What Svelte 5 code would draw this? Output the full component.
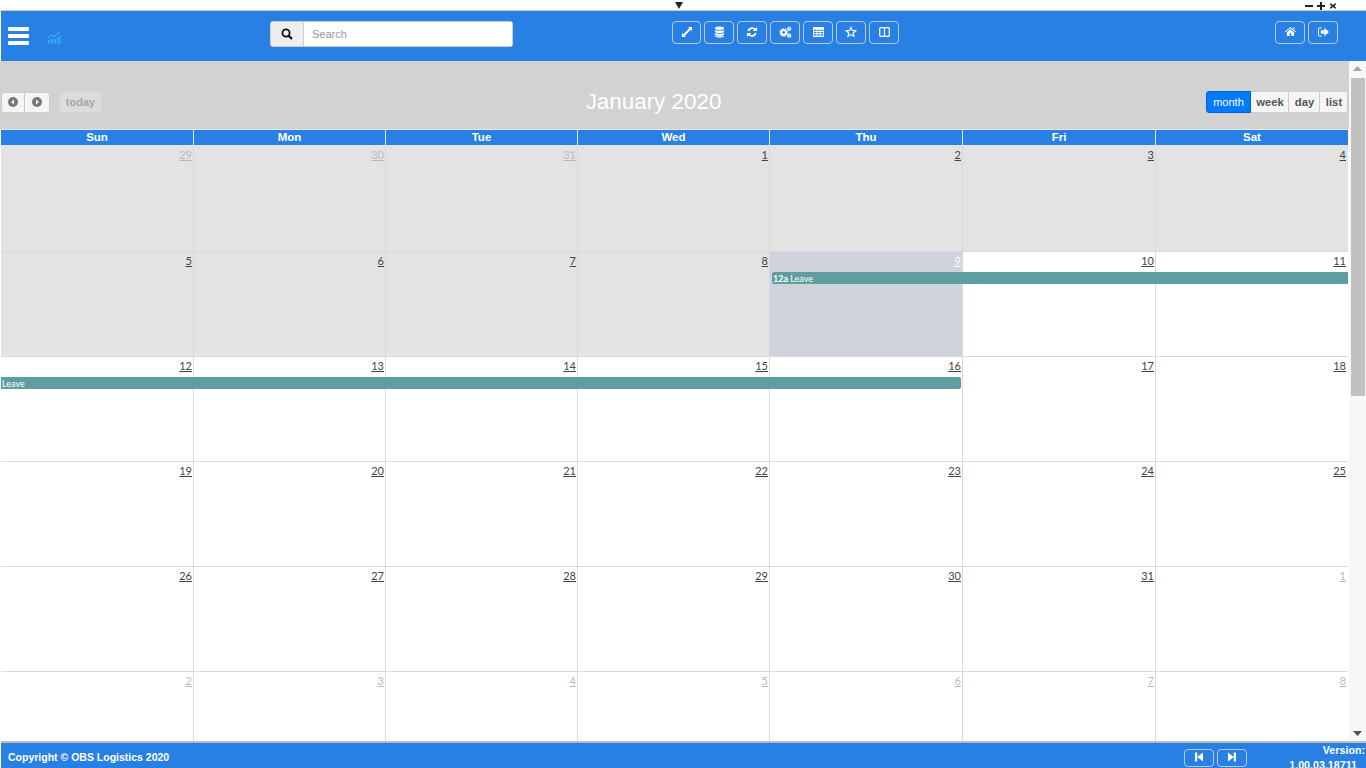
<script>
  const heads = ['Sun','Mon','Tue','Wed','Thu','Fri','Sat'];
  const weeks = [
    { h: 107, days: [[29,4],[30,4],[31,4],[1,2],[2,2],[3,2],[4,2]] },
    { h: 105, days: [[5,2],[6,2],[7,2],[8,2],[9,3],[10,0],[11,0]], ev: { time: '12a', cls: 'from-thu' } },
    { h: 105, days: [[12,0],[13,0],[14,0],[15,0],[16,0],[17,0],[18,0]], ev: { time: '', cls: 'to-thu' } },
    { h: 105, days: [[19,0],[20,0],[21,0],[22,0],[23,0],[24,0],[25,0]] },
    { h: 105, days: [[26,0],[27,0],[28,0],[29,0],[30,0],[31,0],[1,1]] },
    { h: 70, days: [[2,1],[3,1],[4,1],[5,1],[6,1],[7,1],[8,1]] }
  ];
  const kinds = ['', 'muted', 'past', 'today', 'past muted'];
  const topButtons = ['expand','db','sync','cogs','table','star','cols'];
</script>

<div class="page">
  <div class="strip">
    <svg class="caret" width="8" height="7" viewBox="0 0 8 7"><path d="M0 0h8L4 7z" fill="#222"/></svg>
    <div class="winctl">
      <svg width="8" height="8" viewBox="0 0 8 8"><path d="M0 3h8v2H0z" fill="#222"/></svg>
      <svg width="8" height="8" viewBox="0 0 8 8"><path d="M3 0h2v3h3v2H5v3H3V5H0V3h3z" fill="#222"/></svg>
      <svg width="8" height="8" viewBox="0 0 8 8"><path d="M1.500 1l2.500 2 2.500-2L7 2.500 5.300 4 7 5.500 6.500 7 4 5 1.500 7 1 5.500 2.700 4 1 2.500z" fill="#222"/></svg>
    </div>
  </div>

  <header class="top">
    <div class="burger"><i></i><i></i><i></i></div>
    <svg class="chart" width="14" height="13" viewBox="0 0 14 13">
      <path d="M1 12.500V9h2v3.500zM4 12.500V7.500h2v5zM7 12.500V8h2v4.500zM10 12.500V6h1.500v6.500zM12.200 12.500V5h1.500v7.500z" fill="#35a8f6"/>
      <path d="M1 6.500l3.500-2.500L7 5.500l5.500-4.500" fill="none" stroke="#35a8f6" stroke-width="1.100"/>
    </svg>
    <div class="search">
      <span class="addon">
        <svg width="12" height="12" viewBox="0 0 12 12"><circle cx="5" cy="5" r="3.600" fill="none" stroke="#111" stroke-width="1.800"/><path d="M7.600 7.600L11 11" stroke="#111" stroke-width="2.200"/></svg>
      </span>
      <input placeholder="Search" />
    </div>
    <div class="tools">
      {#each topButtons as b}
        <button class="ghost">
          {#if b === 'expand'}
            <svg width="12" height="12" viewBox="0 0 13 13" fill="#fff"><path d="M7.500 1H12v4.500L10.500 4 4 10.500 5.500 12H1V7.500L2.500 9 9 2.500z"/></svg>
          {:else if b === 'db'}
            <svg width="11" height="12" viewBox="0 0 12 13" fill="#fff"><ellipse cx="6" cy="2.500" rx="5" ry="2"/><path d="M1 4.200c1 1.400 9 1.400 10 0V6.300c-1 1.800-9 1.800-10 0zM1 7.300c1 1.400 9 1.400 10 0v2c-1 1.800-9 1.800-10 0zM1 10.100c1 1.400 9 1.400 10 0v.7c-1 2.300-9 2.300-10 0z"/></svg>
          {:else if b === 'sync'}
            <svg width="12" height="12" viewBox="0 0 13 13" fill="none"><path d="M2.400 5.500A4.300 4.300 0 0 1 9.800 3.800" stroke="#fff" stroke-width="2"/><path d="M10.600 7.500A4.300 4.300 0 0 1 3.200 9.200" stroke="#fff" stroke-width="2"/><path d="M12 1v4.500H7.500zM1 12V7.500h4.500z" fill="#fff"/></svg>
          {:else if b === 'cogs'}
            <svg width="13" height="12" viewBox="0 0 14 13" fill="none" stroke="#fff"><circle cx="5" cy="7" r="2.600" stroke-width="2.200"/><circle cx="5" cy="7" r="4.300" stroke-width="1" stroke-dasharray="1.500 1.200"/><circle cx="11" cy="3" r="1.500" stroke-width="1.600"/><circle cx="11" cy="10.500" r="1.500" stroke-width="1.600"/></svg>
          {:else if b === 'table'}
            <svg width="11" height="10" viewBox="0 0 12 11" fill="#fff"><path d="M0 0h12v11H0zM1 3v1.500h2.800V3zm3.800 0v1.500h2.400V3zm3.400 0v1.500H11V3zM1 5.500V7h2.800V5.500zm3.800 0V7h2.400V5.500zm3.400 0V7H11V5.500zM1 8v1.500h2.800V8zm3.800 0v1.500h2.400V8zm3.400 0v1.500H11V8z" fill-rule="evenodd"/></svg>
          {:else if b === 'star'}
            <svg width="12" height="12" viewBox="0 0 13 13"><path d="M6.500 1.500l1.500 3.300 3.600.4-2.700 2.400.8 3.500-3.200-1.800-3.200 1.800.8-3.500L1.400 5.200 5 4.800z" fill="none" stroke="#fff" stroke-width="1.300"/></svg>
          {:else}
            <svg width="11" height="10" viewBox="0 0 12 11" fill="none" stroke="#fff" stroke-width="1.400"><rect x=".7" y=".7" width="10.600" height="9.600" rx="1"/><path d="M6 1v9"/></svg>
          {/if}
        </button>
      {/each}
    </div>
    <div class="tools right">
      <button class="ghost">
        <svg width="11" height="9" viewBox="0 0 12 10" fill="#fff"><path d="M6 0l6 5-.7.800L6 1.500.7 5.800 0 5zM2 6l4-3.400L10 6v4H7V7H5v3H2zM9 .6h1.500v2.200L9 1.600z"/></svg>
      </button>
      <button class="ghost">
        <svg width="11" height="10" viewBox="0 0 12 11"><path d="M4 1H1.500a1 1 0 0 0-1 1v7a1 1 0 0 0 1 1H4" fill="none" stroke="#fff" stroke-width="1"/><path d="M3 3.500h4V.8l5 4.700-5 4.700V7.500H3z" fill="#fff"/></svg>
      </button>
    </div>
  </header>

  <div class="middle">
    <main class="cal">
      <div class="toolbar">
        <div class="left">
          <div class="group nav">
            <button class="lite">
              <svg width="10" height="10" viewBox="0 0 10 10"><circle cx="5" cy="5" r="5" fill="#777"/><path d="M6 2.500v5L3 5z" fill="#f5f5f5"/></svg>
            </button>
            <button class="lite">
              <svg width="10" height="10" viewBox="0 0 10 10"><circle cx="5" cy="5" r="5" fill="#777"/><path d="M4 2.500v5L7 5z" fill="#f5f5f5"/></svg>
            </button>
          </div>
          <button class="todaybtn">today</button>
        </div>
        <h2>January 2020</h2>
        <div class="group views">
          <button class="active">month</button>
          <button class="lite">week</button>
          <button class="lite">day</button>
          <button class="lite">list</button>
        </div>
      </div>

      <div class="grid heads">
        {#each heads as h}<div class="head">{h}</div>{/each}
      </div>

      {#each weeks as w}
        <div class="grid week" style="height:{w.h}px">
          {#each w.days as d, i}
            <div class="day {kinds[d[1]]}" style="grid-column:{i + 1}"><span class="num">{d[0]}</span></div>
          {/each}
          {#if w.ev}
            <div class="event {w.ev.cls}">
              {#if w.ev.time}<b>{w.ev.time}</b>{' '}{/if}Leave
            </div>
          {/if}
        </div>
      {/each}
    </main>

    <div class="scroll">
      <svg class="arrow" width="9" height="5" viewBox="0 0 9 5"><path d="M4.500 0L9 5H0z" fill="#a3a3a3"/></svg>
      <div class="thumb"></div>
      <svg class="arrow down" width="9" height="5" viewBox="0 0 9 5"><path d="M0 0h9L4.500 5z" fill="#505050"/></svg>
    </div>
  </div>

  <footer class="foot">
    <span class="copy">Copyright © OBS Logistics 2020</span>
    <div class="pager">
      <button class="ghost small">
        <svg width="8" height="10" viewBox="0 0 9 10" fill="#fff"><path d="M0 0h2.500v10H0zM9 0v10L2.500 5z"/></svg>
      </button>
      <button class="ghost small">
        <svg width="8" height="10" viewBox="0 0 9 10" fill="#fff"><path d="M9 0H6.500v10H9zM0 0v10l6.500-5z"/></svg>
      </button>
    </div>
    <div class="version">Version:<br /><span class="build">1.00.03.18711</span></div>
  </footer>
</div>

<style>
  :global(body) { margin: 0; background: #fff; overflow: hidden; }
  .page { width: 1366px; height: 768px; display: flex; flex-direction: column; overflow: hidden; font-family: "Liberation Sans", Arial, sans-serif; }
  button { font-family: inherit; padding: 0; cursor: pointer; }

  .strip { height: 10px; flex: none; display: flex; align-items: center; border-bottom: 1px solid #c9c9c9; }
  .caret { margin-left: 675px; margin-top: 1px; }
  .winctl { display: flex; gap: 4px; margin-left: 622px; margin-top: 1px; }

  .top { height: 50px; flex: none; margin-left: 1px; background: #2980e4; display: flex; align-items: flex-start; }
  .burger { width: 21px; margin: 16px 0 0 7px; display: flex; flex-direction: column; gap: 3.500px; }
  .burger i { display: block; height: 3.500px; background: #fff; border-radius: 1px; }
  .chart { margin: 20px 0 0 18px; }
  .search { display: flex; width: 243px; height: 26px; margin: 10px 0 0 209px; box-sizing: border-box; border: 1px solid #ccc; border-radius: 3px; background: #fff; }
  .addon { width: 32px; flex: none; background: #eee; border-right: 1px solid #ccc; display: flex; align-items: center; justify-content: center; border-radius: 2px 0 0 2px; }
  .search input { flex: 1; min-width: 0; border: 0; outline: 0; padding: 0 0 0 8px; font: 11px "Liberation Sans", sans-serif; color: #555; background: #fff; }
  .search input::placeholder { color: #999; opacity: 1; }

  .tools { display: flex; gap: 3px; margin: 10px 0 0 159px; }
  .tools.right { margin-left: 376px; }
  .ghost { width: 30px; height: 23px; box-sizing: border-box; background: transparent; border: 1px solid #b9c9dc; border-radius: 4px; display: flex; align-items: center; justify-content: center; padding-bottom: 2px; }
  .tools .ghost:first-child:not(:last-child) { width: 29px; }
  .tools.right .ghost:first-child { width: 30px; }

  .middle { flex: 1; min-height: 0; display: flex; }
  .cal { width: 1348px; flex: none; padding-left: 1px; background: #fff; }
  .toolbar { height: 68px; background: #d2d2d2; margin-left: -1px; padding-left: 1px; padding-right: 1px; display: grid; grid-template-columns: 1fr auto 1fr; align-items: center; }
  .left { display: flex; align-items: center; gap: 9px; margin-top: 14px; }
  .group { display: flex; }
  .nav button { width: 25px; height: 21px; display: flex; align-items: center; justify-content: center; }
  .nav button:first-child { width: 24px; }
  .lite { background: #f5f5f5; border: 1px solid #ccc; color: #555; font-size: 11px; font-weight: 700; height: 22px; }
  .nav .lite:first-child { border-radius: 3px 0 0 3px; }
  .nav .lite:last-child { border-radius: 0 3px 3px 0; border-left: 0; }
  .todaybtn { width: 43px; height: 21px; background: #dcdcdc; border: 1px solid #d6d6d6; border-radius: 3px; color: #a6a6a6; font-size: 11px; font-weight: 700; }
  h2 { margin: 14px 0 0; font-size: 22.400px; font-weight: 400; color: #fff; line-height: 28px; transform: translateX(-21px); }
  .views { justify-self: end; margin-top: 14px; }
  .views button { height: 22px; border-left: 0; }
  .views .active { width: 45px; background: #007bff; border: 1px solid #0062cc; border-radius: 3px 0 0 3px; color: #fff; font-size: 11px; font-weight: 400; }
  .views .lite { font-size: 11.300px; padding-left: 1px; }
  .views .lite:nth-child(2) { width: 38px; }
  .views .lite:nth-child(3) { width: 31px; }
  .views .lite:nth-child(4) { width: 28px; border-radius: 0 3px 3px 0; }

  .grid { display: grid; grid-template-columns: 193px 192px 192px 192px 193px 193px 192px; width: 1347px; }
  .heads { border-top: 1px solid #e6e6e6; height: 15px; }
  .head { background: #2980e4; color: #fff; font-size: 11.500px; font-weight: 700; line-height: 15px; text-align: center; border-right: 1px solid #dfe9f5; box-sizing: border-box; }
  .head:last-child { border-right: 0; }
  .week { box-sizing: border-box; }
  .day { grid-row: 1; border-right: 1px solid #dadada; border-bottom: 1px solid #dadada; box-sizing: border-box; text-align: right; padding: 2px 1px 0 0; background: #fff; min-height: 0; font-size: 11px; line-height: 13px; }
  .heads + .week .day { padding-top: 3px; }
  .day:nth-child(7) { border-right: 0; padding-right: 2px; }
  .num { font: 11px/13px Lato, "Open Sans", sans-serif; color: #444; text-decoration: underline; }
  .muted .num { color: #bbb; }
  .past { background: #e3e3e3; }
  .today { background: #cfd3db; }
  .today .num { color: #fff; }
  .event { grid-row: 1; align-self: start; margin-top: 20px; height: 12px; background: #5f9ea0; color: #fff; font: 9px/13px Lato, "Open Sans", sans-serif; padding-left: 1px; white-space: nowrap; overflow: hidden; box-sizing: border-box; }
  .event b { font-weight: 700; }
  .from-thu { grid-column: 5 / 8; margin-left: 2px; border-radius: 2px 0 0 2px; }
  .to-thu { grid-column: 1 / 6; margin-right: 2px; border-radius: 0 2px 2px 0; }

  .scroll { flex: 1; background: #f7f7f7; display: flex; flex-direction: column; align-items: center; }
  .arrow { margin-top: 5px; flex: none; }
  .thumb { width: 14px; height: 318px; margin-top: 7px; background: #c1c1c1; flex: none; }
  .down { margin-top: auto; margin-bottom: 7px; }

  .foot { height: 25px; flex: none; margin-left: 1px; background: #2980e4; box-shadow: 0 -2px 0 #bdbdbd; display: flex; align-items: flex-start; overflow: hidden; }
  .copy { margin: 8px 0 0 7px; width: 180px; flex: none; color: #fff; font-size: 10.500px; line-height: 13px; font-weight: 700; }
  .pager { display: flex; gap: 3px; margin: 6px 0 0 996px; }
  .small { height: 18px; }
  .version { margin: 0 0 0 auto; padding-right: 1px; text-align: right; color: #fff; font-size: 10.700px; font-weight: 700; line-height: 15px; }
  .build { margin-right: 8px; }
</style>
